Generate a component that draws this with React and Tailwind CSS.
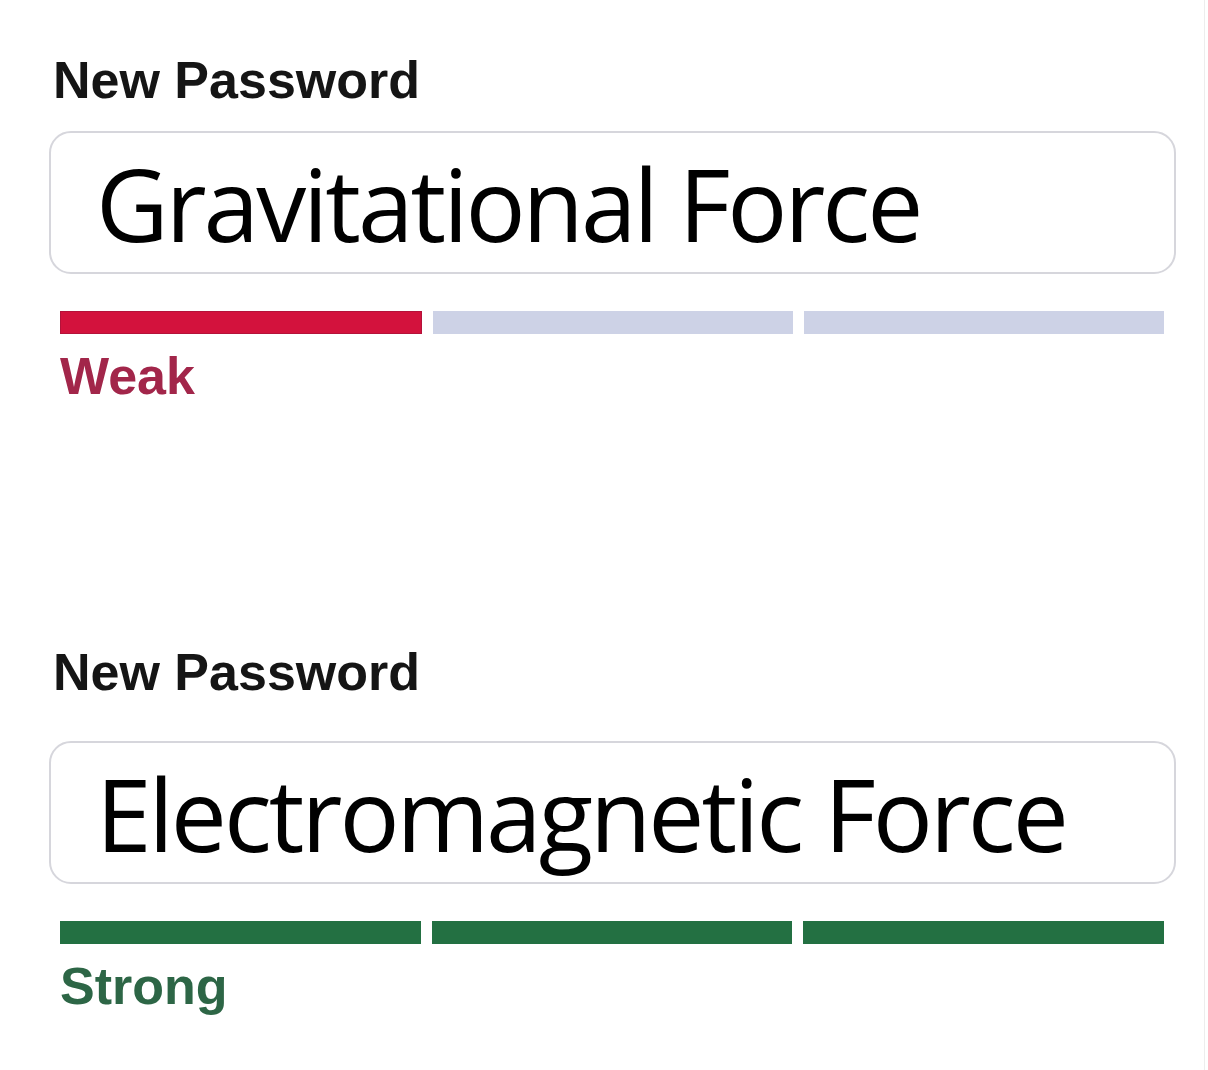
const strength = {
  weak: {
    label: 'Weak',
    text: 'text-[#a2264a]',
    bars: ['bg-[#d3123d] border border-[#b4123a]', 'bg-[#cdd2e6]', 'bg-[#cdd2e6]'],
  },
  strong: {
    label: 'Strong',
    text: 'text-[#2d6646]',
    bars: ['bg-[#237042]', 'bg-[#237042]', 'bg-[#237042]'],
  },
}

function PasswordField({ value, level, className, boxGap }) {
  const s = strength[level]
  return (
    <div className={className}>
      <div className="text-[52px] leading-[60px] font-bold text-[#151515] pl-[4px] [font-family:'Liberation_Sans',Arial,sans-serif]">
        New Password
      </div>
      <div className={`${boxGap} h-[143px] rounded-[22px] border-2 border-[#d6d6dc] bg-white flex items-center pl-[45px]`}>
        <span className="text-[100px] leading-none tracking-[-3px] text-black whitespace-nowrap [font-family:'Open_Sans',sans-serif]">
          {value}
        </span>
      </div>
      <div className="mt-[37px] ml-[11px] mr-[12px] flex gap-[11px]">
        {s.bars.map((cls, i) => (
          <div key={i} className={`flex-1 h-[23px] ${cls}`} />
        ))}
      </div>
      <div className={`mt-[12px] pl-[11px] text-[52px] leading-[60px] font-bold ${s.text} [font-family:'Liberation_Sans',Arial,sans-serif]`}>
        {s.label}
      </div>
    </div>
  )
}

export default function App() {
  return (
    <div className="w-[1208px] h-[1070px] bg-white overflow-hidden">
      <div className="w-[1205px] h-full border-r border-[#ededed] pl-[49px] pr-[28px]">
        <PasswordField value="Gravitational Force" level="weak" className="pt-[50px]" boxGap="mt-[21px]" />
        <PasswordField value="Electromagnetic Force" level="strong" className="mt-[236px]" boxGap="mt-[39px]" />
      </div>
    </div>
  )
}
